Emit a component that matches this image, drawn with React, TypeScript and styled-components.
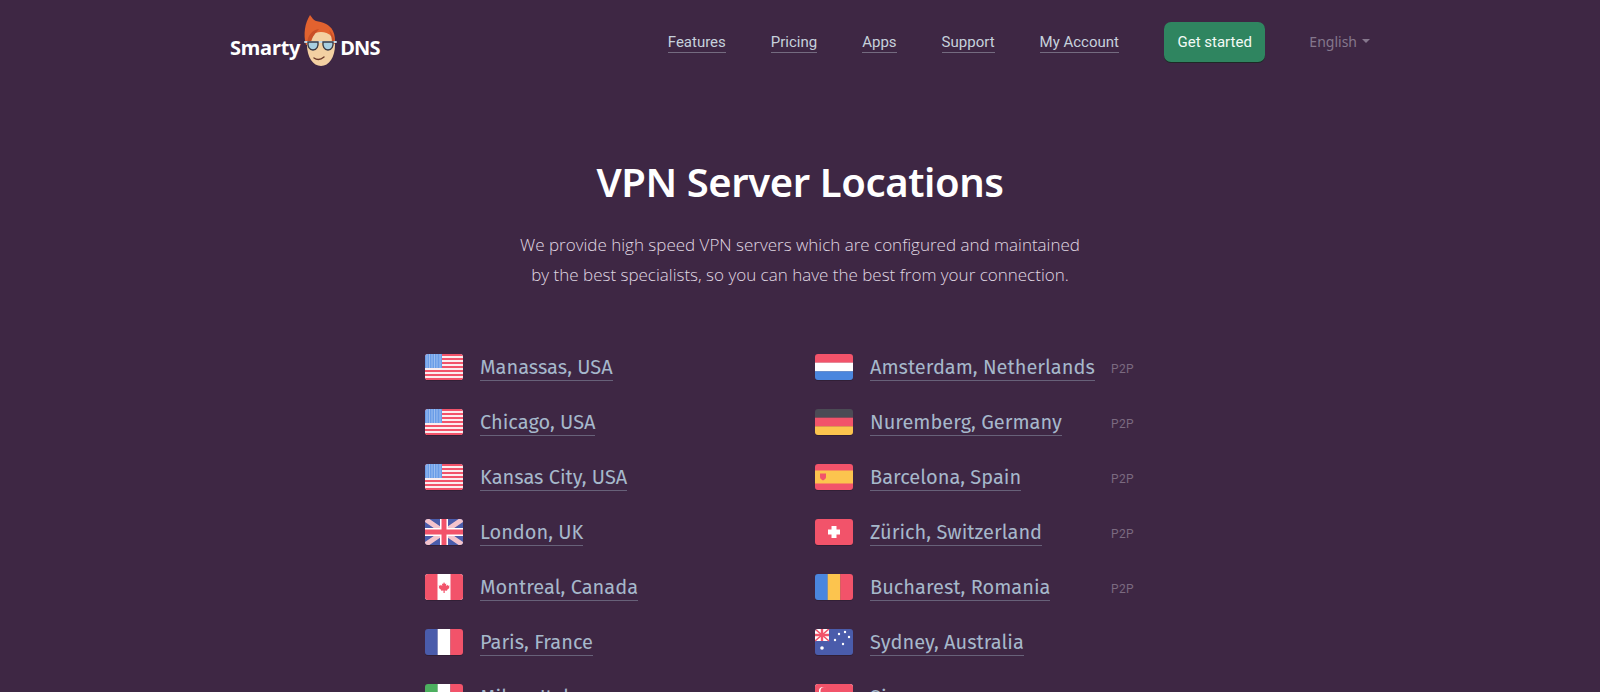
import type { ReactNode } from 'react';
import styled, { createGlobalStyle } from 'styled-components';

const red = '#f2536a';
const white = '#ffffff';
const blue = '#4a5cab';
const yellow = '#fcc44e';

const GlobalStyle = createGlobalStyle`
  html, body {
    margin: 0;
    height: 692px;
    overflow: hidden;
    background: #3e2744;
  }
  * {
    box-sizing: border-box;
  }
`;

const Page = styled.div`
  height: 692px;
  overflow: hidden;
  background: #3e2744;
  font-family: Roboto, "Noto Sans", sans-serif;
`;

const Header = styled.header`
  display: flex;
  align-items: center;
  justify-content: space-between;
  height: 84px;
  padding: 0 230px;
`;

const Logo = styled.a`
  display: flex;
  align-items: center;
  height: 84px;
  padding-top: 10px;
  color: #fff;
  font-family: "Noto Sans", sans-serif;
  font-size: 20px;
  font-weight: 700;
  letter-spacing: -0.2px;
`;

const LogoDns = styled.span`
  letter-spacing: -0.9px;
`;

const LogoFace = styled.svg`
  width: 40px;
  height: 52px;
  margin: -12px 0 0 0;
`;

const Nav = styled.nav`
  display: flex;
  align-items: center;
`;

const NavLink = styled.a`
  margin-right: 45px;
  color: #c6d1dc;
  font-size: 15px;
  line-height: 20px;
  border-bottom: 1px solid rgba(198, 209, 220, 0.4);
`;

const StartButton = styled.a`
  display: block;
  height: 40px;
  margin-right: 44px;
  padding: 0 13.5px;
  border-radius: 7px;
  background: #2f8560;
  box-shadow: 0 1px 0 #1c2a26;
  color: #f3faf6;
  font-size: 15px;
  line-height: 40px;
`;

const Language = styled.span`
  display: flex;
  align-items: center;
  padding-bottom: 2px;
  color: #85778d;
  font-family: "Noto Sans", sans-serif;
  font-size: 14px;
`;

const Caret = styled.i`
  width: 0;
  height: 0;
  margin-left: 5px;
  border-top: 4px solid #85778d;
  border-left: 4px solid transparent;
  border-right: 4px solid transparent;
`;

const Intro = styled.section`
  padding-top: 70px;
  text-align: center;
`;

const Title = styled.h1`
  margin: 0 0 20px;
  color: #fff;
  font-family: "Noto Sans", sans-serif;
  font-size: 40px;
  font-weight: 600;
  letter-spacing: -0.4px;
  line-height: 56px;
`;

const Lead = styled.p`
  margin: 0;
  color: #e0d8e3;
  font-family: "Open Sans", sans-serif;
  font-size: 17px;
  font-weight: 300;
  line-height: 30px;
`;

const Locations = styled.ul`
  display: grid;
  grid-template-columns: 390px 360px;
  grid-auto-rows: 55px;
  justify-content: center;
  margin: 51px 0 0;
  padding: 0;
  list-style: none;
`;

const Location = styled.li`
  display: flex;
  align-items: center;
`;

const FlagBox = styled.span`
  display: block;
  width: 38px;
  height: 26px;
  margin: -3px 17px 0 0;
  overflow: hidden;
  border-radius: 3px;
  box-shadow: 0 1px 0 rgba(0, 0, 0, 0.2);

  svg {
    display: block;
    width: 38px;
    height: 26px;
  }
`;

const City = styled.a`
  margin-bottom: 2px;
  color: #a6b8cb;
  font-family: "Fira Sans", "Noto Sans", sans-serif;
  font-size: 20px;
  line-height: 26px;
  border-bottom: 1px solid rgba(166, 184, 203, 0.4);
`;

const Badge = styled.span`
  margin: 0 41px 0 auto;
  color: #7b6a80;
  font-size: 12px;
  letter-spacing: 0.4px;
`;

const FlagSvg = ({ children }: { children: ReactNode }) => (
  <FlagBox>
    <svg viewBox="0 0 38 26">{children}</svg>
  </FlagBox>
);

const StripesH = ({ colors }: { colors: string[] }) => (
  <FlagSvg>
    {colors.map((c, i) => (
      <rect key={i} y={(i * 26) / colors.length} width="38" height={26 / colors.length + 0.2} fill={c} />
    ))}
  </FlagSvg>
);

const StripesV = ({ colors }: { colors: string[] }) => (
  <FlagSvg>
    {colors.map((c, i) => (
      <rect key={i} x={(i * 38) / colors.length} width={38 / colors.length + 0.2} height="26" fill={c} />
    ))}
  </FlagSvg>
);

const Usa = () => (
  <FlagSvg>
    <rect width="38" height="26" fill="#fbeef0" />
    {[0, 1, 2, 3, 4, 5, 6].map((i) => (
      <rect key={i} y={i * 4} width="38" height="2" fill={red} />
    ))}
    <rect y="24" width="38" height="2" fill={red} />
    <rect width="17" height="14" fill="#6a9de8" />
    {[1, 3, 5, 7, 9, 11, 13].flatMap((y) =>
      [1.5, 4, 6.5, 9, 11.5, 14.5].map((x) => (
        <rect key={`${x}-${y}`} x={x} y={y - 0.5} width="1" height="1" fill="#cfe0f8" />
      ))
    )}
  </FlagSvg>
);

const Uk = () => (
  <FlagSvg>
    <rect width="38" height="26" fill={blue} />
    <path d="M0 0L38 26M38 0L0 26" stroke="#f4c3cc" strokeWidth="5" />
    <path d="M19 0V26M0 13H38" stroke={white} strokeWidth="8" />
    <path d="M19 0V26M0 13H38" stroke={red} strokeWidth="5" />
  </FlagSvg>
);

const Canada = () => (
  <FlagSvg>
    <rect width="38" height="26" fill={white} />
    <rect width="12.5" height="26" fill={red} />
    <rect x="25.5" width="12.5" height="26" fill={red} />
    <path
      d="M19 8l1.100 2 1.200-.5-.4 2.500 1.600-1.200.5 1 1.500-.2-.5 1.800.6.4-2.600 2.100.2.9-2.500-.3V19h-1.200v-2.500l-2.500.3.2-.9-2.600-2.100.6-.4-.5-1.800 1.500.2.5-1 1.600 1.200-.4-2.500 1.200.5z"
      fill={red}
    />
  </FlagSvg>
);

const Spain = () => (
  <FlagSvg>
    <rect width="38" height="26" fill={red} />
    <rect y="6.5" width="38" height="13" fill={yellow} />
    <path d="M5 9.500h6v3.500c0 1.700-1.400 2.700-3 3.400-1.600-.7-3-1.700-3-3.400z" fill={red} />
  </FlagSvg>
);

const Switzerland = () => (
  <FlagSvg>
    <rect width="38" height="26" fill={red} />
    <path d="M16.500 7h5v3.500H25v5h-3.500V19h-5v-3.500H13v-5h3.500z" fill={white} />
  </FlagSvg>
);

const Australia = () => (
  <FlagSvg>
    <rect width="38" height="26" fill={blue} />
    <rect width="14" height="12" fill={white} />
    <path d="M0 0L14 12M14 0L0 12" stroke={red} strokeWidth="1.6" />
    <path d="M7 0V12M0 6H14" stroke={red} strokeWidth="2.4" />
    {[[24, 5], [30, 3], [34, 8], [20, 11], [28, 15], [7, 19]].map(([x, y]) => (
      <circle key={`${x}-${y}`} cx={x} cy={y} r={y === 19 ? 1.8 : 1.2} fill={white} />
    ))}
  </FlagSvg>
);

const Singapore = () => (
  <FlagSvg>
    <rect width="38" height="26" fill={white} />
    <rect width="38" height="13" fill={red} />
    <circle cx="8" cy="7" r="4" fill={white} />
    <circle cx="9.500" cy="7" r="4" fill={red} />
  </FlagSvg>
);

const locations = [
  { flag: <Usa />, name: 'Manassas, USA' },
  { flag: <StripesH colors={[red, white, '#4a86de']} />, name: 'Amsterdam, Netherlands', p2p: true },
  { flag: <Usa />, name: 'Chicago, USA' },
  { flag: <StripesH colors={['#4b4b55', red, yellow]} />, name: 'Nuremberg, Germany', p2p: true },
  { flag: <Usa />, name: 'Kansas City, USA' },
  { flag: <Spain />, name: 'Barcelona, Spain', p2p: true },
  { flag: <Uk />, name: 'London, UK' },
  { flag: <Switzerland />, name: 'Zürich, Switzerland', p2p: true },
  { flag: <Canada />, name: 'Montreal, Canada' },
  { flag: <StripesV colors={['#4a86de', yellow, red]} />, name: 'Bucharest, Romania', p2p: true },
  { flag: <StripesV colors={[blue, white, red]} />, name: 'Paris, France' },
  { flag: <Australia />, name: 'Sydney, Australia' },
  { flag: <StripesV colors={['#4caf5f', white, red]} />, name: 'Milan, Italy' },
  { flag: <Singapore />, name: 'Singapore' },
];

const App = () => {
  return (
    <Page>
      <GlobalStyle />
      <Header>
        <Logo>
          Smarty
          <LogoFace viewBox="0 0 40 52">
            <path d="M6 30C3 19 5 8 10 0c2 2 3 5 6 6 6 1 14 3 17 10 2 4 2 8 2 14z" fill="#e2622f" />
            <path d="M7 30c0-7 6-13 14-13s14 6 14 13c0 12-6 21-14 21S7 42 7 30z" fill="#f3d0a2" />
            <path d="M7 28c1-8 5-13 12-14-3 4-7 7-8 14z" fill="#c94f26" />
            <path d="M29 15c3 3 6 8 6 14l-3-1c0-4-1-9-3-13z" fill="#c94f26" />
            <rect x="4" y="26" width="33" height="2" rx="1" fill="#c9d9e4" />
            <path d="M8 27h10c.5 4-1 8-5 8s-5.500-4-5-8z" fill="#a8cfe2" stroke="#3a3a46" strokeWidth="1.4" />
            <path d="M23 27h10c.5 4-1 8-5 8s-5.500-4-5-8z" fill="#a8cfe2" stroke="#3a3a46" strokeWidth="1.4" />
            <path d="M14 43c3 2 7 1.500 10-1" fill="none" stroke="#6e3a2a" strokeWidth="1.4" strokeLinecap="round" />
          </LogoFace>
          <LogoDns>DNS</LogoDns>
        </Logo>
        <Nav>
          <NavLink>Features</NavLink>
          <NavLink>Pricing</NavLink>
          <NavLink>Apps</NavLink>
          <NavLink>Support</NavLink>
          <NavLink>My Account</NavLink>
          <StartButton>Get started</StartButton>
          <Language>
            English
            <Caret />
          </Language>
        </Nav>
      </Header>
      <Intro>
        <Title>VPN Server Locations</Title>
        <Lead>We provide high speed VPN servers which are configured and maintained</Lead>
        <Lead>by the best specialists, so you can have the best from your connection.</Lead>
      </Intro>
      <Locations>
        {locations.map((item) => (
          <Location key={item.name}>
            {item.flag}
            <City>{item.name}</City>
            {item.p2p && <Badge>P2P</Badge>}
          </Location>
        ))}
      </Locations>
    </Page>
  );
};

export default App;
